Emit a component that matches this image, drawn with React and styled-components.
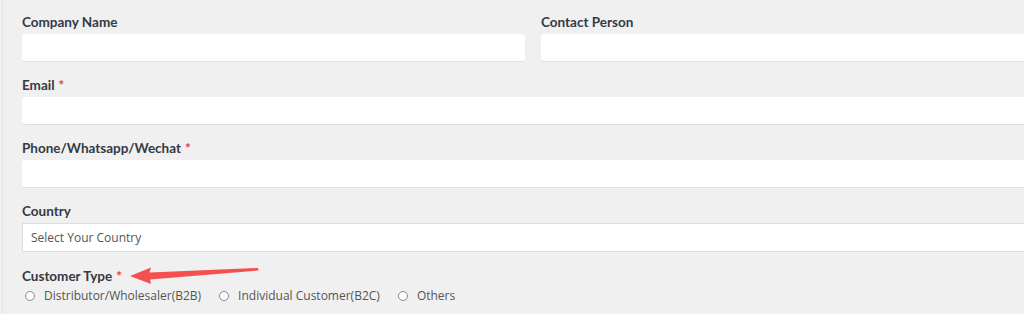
import styled, { createGlobalStyle } from 'styled-components';

const GlobalStyle = createGlobalStyle`
  body {
    margin: 0;
    background: #f0f0f0;
    overflow: hidden;
    font-family: "Open Sans", "Noto Sans", sans-serif;
  }
`;

const Frame = styled.div`
  position: relative;
  margin-left: 2px;
  border-left: 1px solid #e2e2e2;
  padding: 13px 0 0 19px;
  height: 314px;
  box-sizing: border-box;
`;

const Form = styled.form`
  width: 1022px;
  display: flex;
  flex-direction: column;
  gap: 15px;
`;

const Row = styled.div`
  display: grid;
  grid-template-columns: 1fr 1fr;
  column-gap: 16px;
`;

const Field = styled.div`
  display: flex;
  flex-direction: column;
  gap: 3px;
`;

const Label = styled.label`
  font-family: Lato, "Open Sans", sans-serif;
  font-size: 13.5px;
  line-height: 18px;
  font-weight: 700;
  color: #323a45;
`;

const Star = styled.span`
  color: #e8393c;
  margin-left: 4px;
`;

const Input = styled.input`
  height: 27px;
  border: none;
  border-radius: 3px;
  background: #fff;
  box-shadow: 0 1px 0 #dce1e8;
  padding: 0 8px;
  font: inherit;
  box-sizing: border-box;
  outline: none;
`;

const Select = styled.select`
  height: 29px;
  border: 1px solid #dcdcdc;
  border-radius: 0;
  background: #fff;
  padding: 0 8px;
  font-family: "Open Sans", sans-serif;
  font-size: 12px;
  color: #555;
  appearance: none;
  outline: none;
`;

const Choices = styled.div`
  display: flex;
  align-items: center;
  gap: 18px;
  margin-top: -13px;
  padding-left: 3px;
`;

const Choice = styled.label`
  display: flex;
  align-items: center;
  gap: 9px;
  font-size: 12px;
  line-height: 18px;
  color: #555;
`;

const Radio = styled.input`
  appearance: none;
  margin: 0;
  width: 10px;
  height: 10px;
  border: 1px solid #8a8a8a;
  border-radius: 50%;
  background: #fff;
  box-sizing: border-box;
`;

const Arrow = styled.svg`
  position: absolute;
  left: -3px;
  top: 0;
  pointer-events: none;
`;

const App = () => (
  <>
    <GlobalStyle />
    <Frame>
      <Form>
        <Row>
          <Field>
            <Label>Company Name</Label>
            <Input type="text" />
          </Field>
          <Field>
            <Label>Contact Person</Label>
            <Input type="text" />
          </Field>
        </Row>
        <Field>
          <Label>
            Email<Star>*</Star>
          </Label>
          <Input type="email" />
        </Field>
        <Field>
          <Label>
            Phone/Whatsapp/Wechat<Star>*</Star>
          </Label>
          <Input type="tel" />
        </Field>
        <Field>
          <Label>Country</Label>
          <Select defaultValue="">
            <option value="">Select Your Country</option>
          </Select>
        </Field>
        <Field>
          <Label>
            Customer Type<Star>*</Star>
          </Label>
        </Field>
        <Choices>
          {['Distributor/Wholesaler(B2B)', 'Individual Customer(B2C)', 'Others'].map((name) => (
            <Choice key={name}>
              <Radio type="radio" name="customerType" />
              {name}
            </Choice>
          ))}
        </Choices>
      </Form>
      <Arrow width="300" height="314" viewBox="0 0 300 314">
        <path
          d="M130 276 L151 267.5 L149.5 272.5 L258 268 L258.5 270.5 L150 279.5 L151 284 Z"
          fill="#f4504f"
        />
      </Arrow>
    </Frame>
  </>
);

export default App;
